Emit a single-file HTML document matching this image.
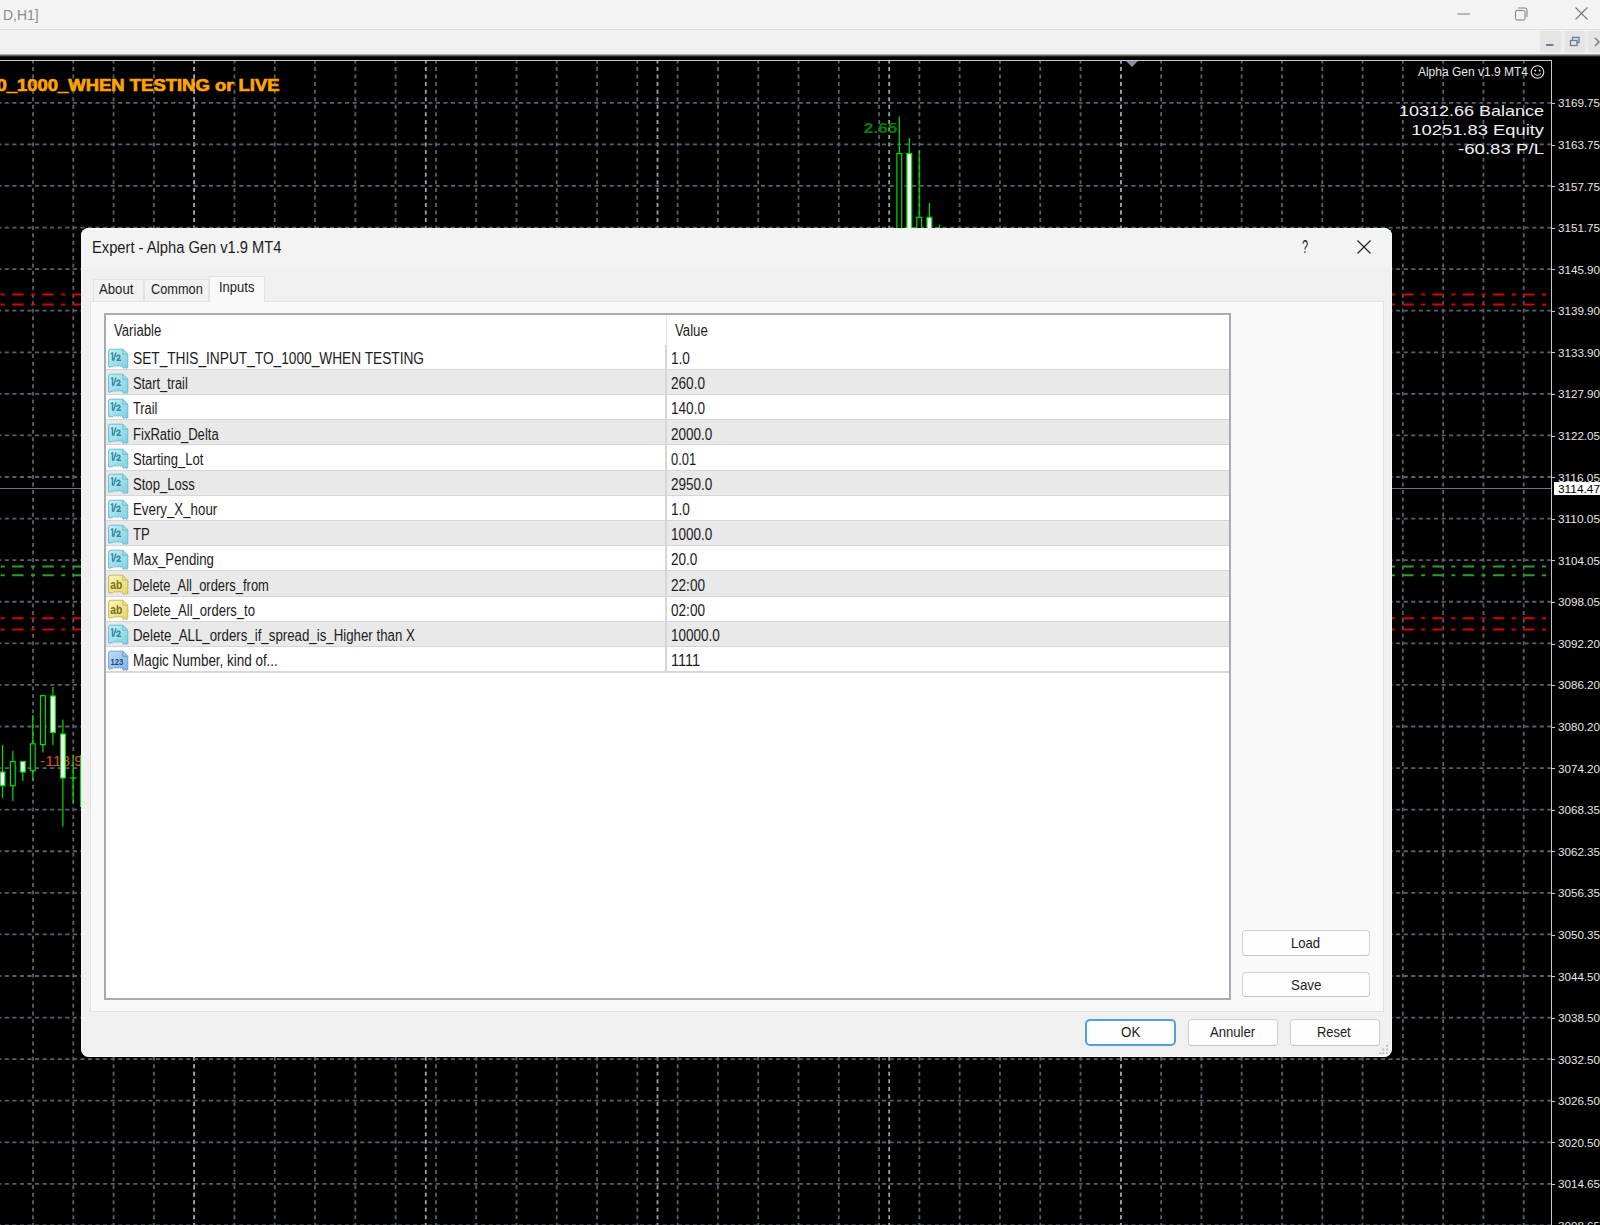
<!DOCTYPE html><html><head><meta charset="utf-8"><style>
*{box-sizing:border-box}
body{margin:0;width:1600px;height:1225px;overflow:hidden;position:relative;background:#000;font-family:"Liberation Sans",sans-serif}
.abs{position:absolute}
.t{position:absolute;white-space:pre;transform-origin:0 0;line-height:1}
#dlg{position:absolute;left:81px;top:228px;width:1311px;height:828.5px;background:#f0f0f0;border-radius:8px;overflow:hidden;box-shadow:inset 0 0 0 1px rgba(255,255,255,0.6)}
.btn{position:absolute;background:#fdfdfd;border:1px solid #d0d0d0;border-bottom-color:#c4c4c4;border-radius:4px}

</style></head><body>
<svg class="abs" style="left:0;top:0" width="1600" height="1225"><rect x="0" y="57" width="1600" height="1168" fill="#000"/><line x1="33.00" y1="61" x2="33.00" y2="1225" stroke="#56616d" stroke-width="1.8" stroke-dasharray="4 3.555" stroke-dashoffset="-6.00"/><line x1="73.29" y1="61" x2="73.29" y2="1225" stroke="#56616d" stroke-width="1.8" stroke-dasharray="4 3.555" stroke-dashoffset="-6.00"/><line x1="113.58" y1="61" x2="113.58" y2="1225" stroke="#56616d" stroke-width="1.8" stroke-dasharray="4 3.555" stroke-dashoffset="-6.00"/><line x1="153.87" y1="61" x2="153.87" y2="1225" stroke="#56616d" stroke-width="1.8" stroke-dasharray="4 3.555" stroke-dashoffset="-6.00"/><line x1="194.16" y1="61" x2="194.16" y2="1225" stroke="#56616d" stroke-width="1.8" stroke-dasharray="4 3.555" stroke-dashoffset="-6.00"/><line x1="234.45" y1="61" x2="234.45" y2="1225" stroke="#56616d" stroke-width="1.8" stroke-dasharray="4 3.555" stroke-dashoffset="-6.00"/><line x1="274.74" y1="61" x2="274.74" y2="1225" stroke="#56616d" stroke-width="1.8" stroke-dasharray="4 3.555" stroke-dashoffset="-6.00"/><line x1="315.03" y1="61" x2="315.03" y2="1225" stroke="#56616d" stroke-width="1.8" stroke-dasharray="4 3.555" stroke-dashoffset="-6.00"/><line x1="355.32" y1="61" x2="355.32" y2="1225" stroke="#56616d" stroke-width="1.8" stroke-dasharray="4 3.555" stroke-dashoffset="-6.00"/><line x1="395.61" y1="61" x2="395.61" y2="1225" stroke="#56616d" stroke-width="1.8" stroke-dasharray="4 3.555" stroke-dashoffset="-6.00"/><line x1="435.90" y1="61" x2="435.90" y2="1225" stroke="#56616d" stroke-width="1.8" stroke-dasharray="4 3.555" stroke-dashoffset="-6.00"/><line x1="476.19" y1="61" x2="476.19" y2="1225" stroke="#56616d" stroke-width="1.8" stroke-dasharray="4 3.555" stroke-dashoffset="-6.00"/><line x1="516.48" y1="61" x2="516.48" y2="1225" stroke="#56616d" stroke-width="1.8" stroke-dasharray="4 3.555" stroke-dashoffset="-6.00"/><line x1="556.77" y1="61" x2="556.77" y2="1225" stroke="#56616d" stroke-width="1.8" stroke-dasharray="4 3.555" stroke-dashoffset="-6.00"/><line x1="597.06" y1="61" x2="597.06" y2="1225" stroke="#56616d" stroke-width="1.8" stroke-dasharray="4 3.555" stroke-dashoffset="-6.00"/><line x1="637.35" y1="61" x2="637.35" y2="1225" stroke="#56616d" stroke-width="1.8" stroke-dasharray="4 3.555" stroke-dashoffset="-6.00"/><line x1="677.64" y1="61" x2="677.64" y2="1225" stroke="#56616d" stroke-width="1.8" stroke-dasharray="4 3.555" stroke-dashoffset="-6.00"/><line x1="717.93" y1="61" x2="717.93" y2="1225" stroke="#56616d" stroke-width="1.8" stroke-dasharray="4 3.555" stroke-dashoffset="-6.00"/><line x1="758.22" y1="61" x2="758.22" y2="1225" stroke="#56616d" stroke-width="1.8" stroke-dasharray="4 3.555" stroke-dashoffset="-6.00"/><line x1="798.51" y1="61" x2="798.51" y2="1225" stroke="#56616d" stroke-width="1.8" stroke-dasharray="4 3.555" stroke-dashoffset="-6.00"/><line x1="838.80" y1="61" x2="838.80" y2="1225" stroke="#56616d" stroke-width="1.8" stroke-dasharray="4 3.555" stroke-dashoffset="-6.00"/><line x1="879.09" y1="61" x2="879.09" y2="1225" stroke="#56616d" stroke-width="1.8" stroke-dasharray="4 3.555" stroke-dashoffset="-6.00"/><line x1="919.38" y1="61" x2="919.38" y2="1225" stroke="#56616d" stroke-width="1.8" stroke-dasharray="4 3.555" stroke-dashoffset="-6.00"/><line x1="959.67" y1="61" x2="959.67" y2="1225" stroke="#56616d" stroke-width="1.8" stroke-dasharray="4 3.555" stroke-dashoffset="-6.00"/><line x1="999.96" y1="61" x2="999.96" y2="1225" stroke="#56616d" stroke-width="1.8" stroke-dasharray="4 3.555" stroke-dashoffset="-6.00"/><line x1="1040.25" y1="61" x2="1040.25" y2="1225" stroke="#56616d" stroke-width="1.8" stroke-dasharray="4 3.555" stroke-dashoffset="-6.00"/><line x1="1080.54" y1="61" x2="1080.54" y2="1225" stroke="#56616d" stroke-width="1.8" stroke-dasharray="4 3.555" stroke-dashoffset="-6.00"/><line x1="1120.83" y1="61" x2="1120.83" y2="1225" stroke="#56616d" stroke-width="1.8" stroke-dasharray="4 3.555" stroke-dashoffset="-6.00"/><line x1="1161.12" y1="61" x2="1161.12" y2="1225" stroke="#56616d" stroke-width="1.8" stroke-dasharray="4 3.555" stroke-dashoffset="-6.00"/><line x1="1201.41" y1="61" x2="1201.41" y2="1225" stroke="#56616d" stroke-width="1.8" stroke-dasharray="4 3.555" stroke-dashoffset="-6.00"/><line x1="1241.70" y1="61" x2="1241.70" y2="1225" stroke="#56616d" stroke-width="1.8" stroke-dasharray="4 3.555" stroke-dashoffset="-6.00"/><line x1="1281.99" y1="61" x2="1281.99" y2="1225" stroke="#56616d" stroke-width="1.8" stroke-dasharray="4 3.555" stroke-dashoffset="-6.00"/><line x1="1322.28" y1="61" x2="1322.28" y2="1225" stroke="#56616d" stroke-width="1.8" stroke-dasharray="4 3.555" stroke-dashoffset="-6.00"/><line x1="1362.57" y1="61" x2="1362.57" y2="1225" stroke="#56616d" stroke-width="1.8" stroke-dasharray="4 3.555" stroke-dashoffset="-6.00"/><line x1="1402.86" y1="61" x2="1402.86" y2="1225" stroke="#56616d" stroke-width="1.8" stroke-dasharray="4 3.555" stroke-dashoffset="-6.00"/><line x1="1443.15" y1="61" x2="1443.15" y2="1225" stroke="#56616d" stroke-width="1.8" stroke-dasharray="4 3.555" stroke-dashoffset="-6.00"/><line x1="1483.44" y1="61" x2="1483.44" y2="1225" stroke="#56616d" stroke-width="1.8" stroke-dasharray="4 3.555" stroke-dashoffset="-6.00"/><line x1="1523.73" y1="61" x2="1523.73" y2="1225" stroke="#56616d" stroke-width="1.8" stroke-dasharray="4 3.555" stroke-dashoffset="-6.00"/><line x1="194.10" y1="61" x2="194.10" y2="1225" stroke="#a2a2a2" stroke-width="1.8" stroke-dasharray="4 3.555" stroke-dashoffset="-6.00"/><line x1="425.80" y1="61" x2="425.80" y2="1225" stroke="#a2a2a2" stroke-width="1.8" stroke-dasharray="4 3.555" stroke-dashoffset="-6.00"/><line x1="657.50" y1="61" x2="657.50" y2="1225" stroke="#a2a2a2" stroke-width="1.8" stroke-dasharray="4 3.555" stroke-dashoffset="-6.00"/><line x1="889.20" y1="61" x2="889.20" y2="1225" stroke="#a2a2a2" stroke-width="1.8" stroke-dasharray="4 3.555" stroke-dashoffset="-6.00"/><line x1="1120.90" y1="61" x2="1120.90" y2="1225" stroke="#a2a2a2" stroke-width="1.8" stroke-dasharray="4 3.555" stroke-dashoffset="-6.00"/><line x1="0" y1="102.80" x2="1551" y2="102.80" stroke="#56616d" stroke-width="1.8" stroke-dasharray="4.1 3.4615" stroke-dashoffset="-4.78"/><line x1="0" y1="144.38" x2="1551" y2="144.38" stroke="#56616d" stroke-width="1.8" stroke-dasharray="4.1 3.4615" stroke-dashoffset="-4.78"/><line x1="0" y1="185.96" x2="1551" y2="185.96" stroke="#56616d" stroke-width="1.8" stroke-dasharray="4.1 3.4615" stroke-dashoffset="-4.78"/><line x1="0" y1="227.54" x2="1551" y2="227.54" stroke="#56616d" stroke-width="1.8" stroke-dasharray="4.1 3.4615" stroke-dashoffset="-4.78"/><line x1="0" y1="269.12" x2="1551" y2="269.12" stroke="#56616d" stroke-width="1.8" stroke-dasharray="4.1 3.4615" stroke-dashoffset="-4.78"/><line x1="0" y1="310.70" x2="1551" y2="310.70" stroke="#56616d" stroke-width="1.8" stroke-dasharray="4.1 3.4615" stroke-dashoffset="-4.78"/><line x1="0" y1="352.28" x2="1551" y2="352.28" stroke="#56616d" stroke-width="1.8" stroke-dasharray="4.1 3.4615" stroke-dashoffset="-4.78"/><line x1="0" y1="393.86" x2="1551" y2="393.86" stroke="#56616d" stroke-width="1.8" stroke-dasharray="4.1 3.4615" stroke-dashoffset="-4.78"/><line x1="0" y1="435.44" x2="1551" y2="435.44" stroke="#56616d" stroke-width="1.8" stroke-dasharray="4.1 3.4615" stroke-dashoffset="-4.78"/><line x1="0" y1="477.02" x2="1551" y2="477.02" stroke="#56616d" stroke-width="1.8" stroke-dasharray="4.1 3.4615" stroke-dashoffset="-4.78"/><line x1="0" y1="518.60" x2="1551" y2="518.60" stroke="#56616d" stroke-width="1.8" stroke-dasharray="4.1 3.4615" stroke-dashoffset="-4.78"/><line x1="0" y1="560.18" x2="1551" y2="560.18" stroke="#56616d" stroke-width="1.8" stroke-dasharray="4.1 3.4615" stroke-dashoffset="-4.78"/><line x1="0" y1="601.76" x2="1551" y2="601.76" stroke="#56616d" stroke-width="1.8" stroke-dasharray="4.1 3.4615" stroke-dashoffset="-4.78"/><line x1="0" y1="643.34" x2="1551" y2="643.34" stroke="#56616d" stroke-width="1.8" stroke-dasharray="4.1 3.4615" stroke-dashoffset="-4.78"/><line x1="0" y1="684.92" x2="1551" y2="684.92" stroke="#56616d" stroke-width="1.8" stroke-dasharray="4.1 3.4615" stroke-dashoffset="-4.78"/><line x1="0" y1="726.50" x2="1551" y2="726.50" stroke="#56616d" stroke-width="1.8" stroke-dasharray="4.1 3.4615" stroke-dashoffset="-4.78"/><line x1="0" y1="768.08" x2="1551" y2="768.08" stroke="#56616d" stroke-width="1.8" stroke-dasharray="4.1 3.4615" stroke-dashoffset="-4.78"/><line x1="0" y1="809.66" x2="1551" y2="809.66" stroke="#56616d" stroke-width="1.8" stroke-dasharray="4.1 3.4615" stroke-dashoffset="-4.78"/><line x1="0" y1="851.24" x2="1551" y2="851.24" stroke="#56616d" stroke-width="1.8" stroke-dasharray="4.1 3.4615" stroke-dashoffset="-4.78"/><line x1="0" y1="892.82" x2="1551" y2="892.82" stroke="#56616d" stroke-width="1.8" stroke-dasharray="4.1 3.4615" stroke-dashoffset="-4.78"/><line x1="0" y1="934.40" x2="1551" y2="934.40" stroke="#56616d" stroke-width="1.8" stroke-dasharray="4.1 3.4615" stroke-dashoffset="-4.78"/><line x1="0" y1="975.98" x2="1551" y2="975.98" stroke="#56616d" stroke-width="1.8" stroke-dasharray="4.1 3.4615" stroke-dashoffset="-4.78"/><line x1="0" y1="1017.56" x2="1551" y2="1017.56" stroke="#56616d" stroke-width="1.8" stroke-dasharray="4.1 3.4615" stroke-dashoffset="-4.78"/><line x1="0" y1="1059.14" x2="1551" y2="1059.14" stroke="#56616d" stroke-width="1.8" stroke-dasharray="4.1 3.4615" stroke-dashoffset="-4.78"/><line x1="0" y1="1100.72" x2="1551" y2="1100.72" stroke="#56616d" stroke-width="1.8" stroke-dasharray="4.1 3.4615" stroke-dashoffset="-4.78"/><line x1="0" y1="1142.30" x2="1551" y2="1142.30" stroke="#56616d" stroke-width="1.8" stroke-dasharray="4.1 3.4615" stroke-dashoffset="-4.78"/><line x1="0" y1="1183.88" x2="1551" y2="1183.88" stroke="#56616d" stroke-width="1.8" stroke-dasharray="4.1 3.4615" stroke-dashoffset="-4.78"/><line x1="0" y1="1225.46" x2="1551" y2="1225.46" stroke="#56616d" stroke-width="1.8" stroke-dasharray="4.1 3.4615" stroke-dashoffset="-4.78"/><line x1="0" y1="488.5" x2="1551" y2="488.5" stroke="#6a7785" stroke-width="1.2"/><line x1="0" y1="294.5" x2="1547" y2="294.5" stroke="#d60000" stroke-width="2" stroke-dasharray="11.5 7.4 4 7.32" stroke-dashoffset="18.12"/><line x1="0" y1="304.5" x2="1547" y2="304.5" stroke="#d60000" stroke-width="2" stroke-dasharray="11.5 7.4 4 7.32" stroke-dashoffset="18.12"/><line x1="0" y1="618.3" x2="1547" y2="618.3" stroke="#d60000" stroke-width="2" stroke-dasharray="11.5 7.4 4 7.32" stroke-dashoffset="18.12"/><line x1="0" y1="629.5" x2="1547" y2="629.5" stroke="#d60000" stroke-width="2" stroke-dasharray="11.5 7.4 4 7.32" stroke-dashoffset="18.12"/><line x1="0" y1="566.6" x2="1547" y2="566.6" stroke="#26a026" stroke-width="2" stroke-dasharray="11.5 7.4 4 7.32" stroke-dashoffset="18.12"/><line x1="0" y1="575.3" x2="1547" y2="575.3" stroke="#26a026" stroke-width="2" stroke-dasharray="11.5 7.4 4 7.32" stroke-dashoffset="18.12"/><line x1="0" y1="60.5" x2="1551.5" y2="60.5" stroke="#c8c8c8" stroke-width="1"/><line x1="1551.5" y1="60" x2="1551.5" y2="1225" stroke="#c8c8c8" stroke-width="1"/><line x1="1551" y1="103.5" x2="1555" y2="103.5" stroke="#c8c8c8" stroke-width="1"/><text x="1558" y="107.3" fill="#e6e6e6" font-family="Liberation Sans" font-size="11.5" textLength="42" lengthAdjust="spacingAndGlyphs">3169.75</text><line x1="1551" y1="145.5" x2="1555" y2="145.5" stroke="#c8c8c8" stroke-width="1"/><text x="1558" y="148.9" fill="#e6e6e6" font-family="Liberation Sans" font-size="11.5" textLength="42" lengthAdjust="spacingAndGlyphs">3163.75</text><line x1="1551" y1="186.5" x2="1555" y2="186.5" stroke="#c8c8c8" stroke-width="1"/><text x="1558" y="190.5" fill="#e6e6e6" font-family="Liberation Sans" font-size="11.5" textLength="42" lengthAdjust="spacingAndGlyphs">3157.75</text><line x1="1551" y1="228.5" x2="1555" y2="228.5" stroke="#c8c8c8" stroke-width="1"/><text x="1558" y="232.0" fill="#e6e6e6" font-family="Liberation Sans" font-size="11.5" textLength="42" lengthAdjust="spacingAndGlyphs">3151.75</text><line x1="1551" y1="269.5" x2="1555" y2="269.5" stroke="#c8c8c8" stroke-width="1"/><text x="1558" y="273.6" fill="#e6e6e6" font-family="Liberation Sans" font-size="11.5" textLength="42" lengthAdjust="spacingAndGlyphs">3145.90</text><line x1="1551" y1="311.5" x2="1555" y2="311.5" stroke="#c8c8c8" stroke-width="1"/><text x="1558" y="315.2" fill="#e6e6e6" font-family="Liberation Sans" font-size="11.5" textLength="42" lengthAdjust="spacingAndGlyphs">3139.90</text><line x1="1551" y1="352.5" x2="1555" y2="352.5" stroke="#c8c8c8" stroke-width="1"/><text x="1558" y="356.8" fill="#e6e6e6" font-family="Liberation Sans" font-size="11.5" textLength="42" lengthAdjust="spacingAndGlyphs">3133.90</text><line x1="1551" y1="394.5" x2="1555" y2="394.5" stroke="#c8c8c8" stroke-width="1"/><text x="1558" y="398.4" fill="#e6e6e6" font-family="Liberation Sans" font-size="11.5" textLength="42" lengthAdjust="spacingAndGlyphs">3127.90</text><line x1="1551" y1="436.5" x2="1555" y2="436.5" stroke="#c8c8c8" stroke-width="1"/><text x="1558" y="439.9" fill="#e6e6e6" font-family="Liberation Sans" font-size="11.5" textLength="42" lengthAdjust="spacingAndGlyphs">3122.05</text><line x1="1551" y1="477.5" x2="1555" y2="477.5" stroke="#c8c8c8" stroke-width="1"/><text x="1558" y="481.5" fill="#e6e6e6" font-family="Liberation Sans" font-size="11.5" textLength="42" lengthAdjust="spacingAndGlyphs">3116.05</text><line x1="1551" y1="519.5" x2="1555" y2="519.5" stroke="#c8c8c8" stroke-width="1"/><text x="1558" y="523.1" fill="#e6e6e6" font-family="Liberation Sans" font-size="11.5" textLength="42" lengthAdjust="spacingAndGlyphs">3110.05</text><line x1="1551" y1="560.5" x2="1555" y2="560.5" stroke="#c8c8c8" stroke-width="1"/><text x="1558" y="564.7" fill="#e6e6e6" font-family="Liberation Sans" font-size="11.5" textLength="42" lengthAdjust="spacingAndGlyphs">3104.05</text><line x1="1551" y1="602.5" x2="1555" y2="602.5" stroke="#c8c8c8" stroke-width="1"/><text x="1558" y="606.3" fill="#e6e6e6" font-family="Liberation Sans" font-size="11.5" textLength="42" lengthAdjust="spacingAndGlyphs">3098.05</text><line x1="1551" y1="644.5" x2="1555" y2="644.5" stroke="#c8c8c8" stroke-width="1"/><text x="1558" y="647.8" fill="#e6e6e6" font-family="Liberation Sans" font-size="11.5" textLength="42" lengthAdjust="spacingAndGlyphs">3092.20</text><line x1="1551" y1="685.5" x2="1555" y2="685.5" stroke="#c8c8c8" stroke-width="1"/><text x="1558" y="689.4" fill="#e6e6e6" font-family="Liberation Sans" font-size="11.5" textLength="42" lengthAdjust="spacingAndGlyphs">3086.20</text><line x1="1551" y1="727.5" x2="1555" y2="727.5" stroke="#c8c8c8" stroke-width="1"/><text x="1558" y="731.0" fill="#e6e6e6" font-family="Liberation Sans" font-size="11.5" textLength="42" lengthAdjust="spacingAndGlyphs">3080.20</text><line x1="1551" y1="768.5" x2="1555" y2="768.5" stroke="#c8c8c8" stroke-width="1"/><text x="1558" y="772.6" fill="#e6e6e6" font-family="Liberation Sans" font-size="11.5" textLength="42" lengthAdjust="spacingAndGlyphs">3074.20</text><line x1="1551" y1="810.5" x2="1555" y2="810.5" stroke="#c8c8c8" stroke-width="1"/><text x="1558" y="814.2" fill="#e6e6e6" font-family="Liberation Sans" font-size="11.5" textLength="42" lengthAdjust="spacingAndGlyphs">3068.35</text><line x1="1551" y1="851.5" x2="1555" y2="851.5" stroke="#c8c8c8" stroke-width="1"/><text x="1558" y="855.7" fill="#e6e6e6" font-family="Liberation Sans" font-size="11.5" textLength="42" lengthAdjust="spacingAndGlyphs">3062.35</text><line x1="1551" y1="893.5" x2="1555" y2="893.5" stroke="#c8c8c8" stroke-width="1"/><text x="1558" y="897.3" fill="#e6e6e6" font-family="Liberation Sans" font-size="11.5" textLength="42" lengthAdjust="spacingAndGlyphs">3056.35</text><line x1="1551" y1="935.5" x2="1555" y2="935.5" stroke="#c8c8c8" stroke-width="1"/><text x="1558" y="938.9" fill="#e6e6e6" font-family="Liberation Sans" font-size="11.5" textLength="42" lengthAdjust="spacingAndGlyphs">3050.35</text><line x1="1551" y1="976.5" x2="1555" y2="976.5" stroke="#c8c8c8" stroke-width="1"/><text x="1558" y="980.5" fill="#e6e6e6" font-family="Liberation Sans" font-size="11.5" textLength="42" lengthAdjust="spacingAndGlyphs">3044.50</text><line x1="1551" y1="1018.5" x2="1555" y2="1018.5" stroke="#c8c8c8" stroke-width="1"/><text x="1558" y="1022.1" fill="#e6e6e6" font-family="Liberation Sans" font-size="11.5" textLength="42" lengthAdjust="spacingAndGlyphs">3038.50</text><line x1="1551" y1="1059.5" x2="1555" y2="1059.5" stroke="#c8c8c8" stroke-width="1"/><text x="1558" y="1063.6" fill="#e6e6e6" font-family="Liberation Sans" font-size="11.5" textLength="42" lengthAdjust="spacingAndGlyphs">3032.50</text><line x1="1551" y1="1101.5" x2="1555" y2="1101.5" stroke="#c8c8c8" stroke-width="1"/><text x="1558" y="1105.2" fill="#e6e6e6" font-family="Liberation Sans" font-size="11.5" textLength="42" lengthAdjust="spacingAndGlyphs">3026.50</text><line x1="1551" y1="1142.5" x2="1555" y2="1142.5" stroke="#c8c8c8" stroke-width="1"/><text x="1558" y="1146.8" fill="#e6e6e6" font-family="Liberation Sans" font-size="11.5" textLength="42" lengthAdjust="spacingAndGlyphs">3020.50</text><line x1="1551" y1="1184.5" x2="1555" y2="1184.5" stroke="#c8c8c8" stroke-width="1"/><text x="1558" y="1188.4" fill="#e6e6e6" font-family="Liberation Sans" font-size="11.5" textLength="42" lengthAdjust="spacingAndGlyphs">3014.65</text><line x1="1551" y1="1226.5" x2="1555" y2="1226.5" stroke="#c8c8c8" stroke-width="1"/><text x="1558" y="1230.0" fill="#e6e6e6" font-family="Liberation Sans" font-size="11.5" textLength="42" lengthAdjust="spacingAndGlyphs">3008.65</text><rect x="1554" y="482" width="46" height="13" fill="#fff"/><text x="1558" y="492.6" fill="#000" font-family="Liberation Sans" font-size="11.5" textLength="42" lengthAdjust="spacingAndGlyphs">3114.47</text><path d="M1126 61 L1138 61 L1132 67 Z" fill="#8090a0"/><text x="40" y="766" fill="#e0501a" font-family="Liberation Sans" font-size="15.5">-118.9</text><line x1="2.5" y1="745" x2="2.5" y2="798" stroke="#00e000" stroke-width="1.2"/><rect x="0.1" y="772" width="4.8" height="13.7" fill="#fff" stroke="#00e000" stroke-width="1.2"/><line x1="12.8" y1="751" x2="12.8" y2="801" stroke="#00e000" stroke-width="1.2"/><rect x="10.4" y="761.5" width="4.8" height="24.2" fill="#000" stroke="#00e000" stroke-width="1.2"/><line x1="22.8" y1="761.5" x2="22.8" y2="781" stroke="#00e000" stroke-width="1.2"/><rect x="20.4" y="761.5" width="4.8" height="10.5" fill="#fff" stroke="#00e000" stroke-width="1.2"/><line x1="32.8" y1="715" x2="32.8" y2="781" stroke="#00e000" stroke-width="1.2"/><rect x="30.4" y="743.8" width="4.8" height="26.8" fill="#000" stroke="#00e000" stroke-width="1.2"/><line x1="42.9" y1="695" x2="42.9" y2="752.4" stroke="#00e000" stroke-width="1.2"/><rect x="40.5" y="695.7" width="4.8" height="48.9" fill="#000" stroke="#00e000" stroke-width="1.2"/><line x1="52.9" y1="687" x2="52.9" y2="745" stroke="#00e000" stroke-width="1.2"/><rect x="50.5" y="696" width="4.8" height="36.5" fill="#fff" stroke="#00e000" stroke-width="1.2"/><line x1="62.9" y1="719.6" x2="62.9" y2="826.6" stroke="#00e000" stroke-width="1.2"/><rect x="60.5" y="734" width="4.8" height="44.0" fill="#fff" stroke="#00e000" stroke-width="1.2"/><line x1="73.1" y1="755.3" x2="73.1" y2="803.4" stroke="#00e000" stroke-width="1.2"/><line x1="70" y1="778" x2="76.5" y2="778" stroke="#00e000" stroke-width="1.2"/><line x1="80.5" y1="755" x2="80.5" y2="807" stroke="#00e000" stroke-width="1.2"/><line x1="899.3" y1="116.5" x2="899.3" y2="330" stroke="#00e000" stroke-width="1.2"/><rect x="896.9" y="153.5" width="4.8" height="146.5" fill="#000" stroke="#00e000" stroke-width="1.2"/><line x1="909.3" y1="138" x2="909.3" y2="330" stroke="#00e000" stroke-width="1.2"/><rect x="906.9" y="153.5" width="4.8" height="146.5" fill="#fff" stroke="#00e000" stroke-width="1.2"/><line x1="919.2" y1="150.5" x2="919.2" y2="330" stroke="#00e000" stroke-width="1.2"/><rect x="916.8" y="217.4" width="4.8" height="82.6" fill="#000" stroke="#00e000" stroke-width="1.2"/><line x1="929.4" y1="203" x2="929.4" y2="330" stroke="#00e000" stroke-width="1.2"/><rect x="927.0" y="217.4" width="4.8" height="82.6" fill="#fff" stroke="#00e000" stroke-width="1.2"/><line x1="939.5" y1="224.6" x2="939.5" y2="300" stroke="#00e000" stroke-width="1.2"/><text x="897.4" y="132.5" fill="#0a7a0a" font-family="Liberation Sans" font-weight="bold" font-size="15" text-anchor="end" textLength="33.6" lengthAdjust="spacingAndGlyphs">2.65</text><text x="279.5" y="91.3" fill="#ffa500" stroke="#ffa500" stroke-width="0.7" font-family="Liberation Sans" font-weight="bold" font-size="17" text-anchor="end" textLength="283" lengthAdjust="spacingAndGlyphs">0_1000_WHEN TESTING or LIVE</text><text x="1528" y="76" fill="#e8e8e8" font-family="Liberation Sans" font-size="12" text-anchor="end">Alpha Gen v1.9 MT4</text><circle cx="1537.5" cy="72" r="6.3" fill="none" stroke="#e8e8e8" stroke-width="1.1"/><circle cx="1535.3" cy="70.5" r="0.9" fill="#e8e8e8"/><circle cx="1539.7" cy="70.5" r="0.9" fill="#e8e8e8"/><path d="M1534 73.5 Q1537.5 77 1541 73.5" fill="none" stroke="#e8e8e8" stroke-width="1"/><text x="1544" y="115.8" fill="#f0f0f0" font-family="Liberation Sans" font-size="15" text-anchor="end" textLength="145.0" lengthAdjust="spacingAndGlyphs">10312.66 Balance</text><text x="1544" y="135" fill="#f0f0f0" font-family="Liberation Sans" font-size="15" text-anchor="end" textLength="132.7" lengthAdjust="spacingAndGlyphs">10251.83 Equity</text><text x="1544" y="154" fill="#f0f0f0" font-family="Liberation Sans" font-size="15" text-anchor="end" textLength="86.0" lengthAdjust="spacingAndGlyphs">-60.83 P/L</text></svg>
<div class="abs" style="left:0;top:0;width:1600px;height:29px;background:#f3f3f3"></div>
<div class="abs" style="left:0;top:29px;width:1600px;height:1px;background:#dedede"></div>
<div class="abs" style="left:0;top:30px;width:1600px;height:24px;background:#f0f0f0"></div>
<div class="abs" style="left:0;top:54px;width:1600px;height:3px;background:linear-gradient(#c8c8c8,#505050 60%,#000)"></div>
<div class="t" style="left:2.6px;top:6.5px;font-size:15px;color:#8a8a8a;transform:scaleX(0.93)">D,H1]</div>
<svg class="abs" style="left:0;top:0" width="1600" height="57"><line x1="1457.5" y1="14" x2="1470" y2="14" stroke="#7a7a7a" stroke-width="1"/><rect x="1515.5" y="10.5" width="9.5" height="9.5" rx="1.5" fill="none" stroke="#7a7a7a" stroke-width="1"/><path d="M1518 8 h7 a2 2 0 0 1 2 2 v7" fill="none" stroke="#7a7a7a" stroke-width="1"/><line x1="1575.5" y1="7.5" x2="1587.5" y2="19.5" stroke="#7a7a7a" stroke-width="1.1"/><line x1="1587.5" y1="7.5" x2="1575.5" y2="19.5" stroke="#7a7a7a" stroke-width="1.1"/><rect x="1540" y="31" width="21.5" height="21.5" rx="2" fill="#e5e5e5"/><rect x="1564.3" y="31" width="21.5" height="21.5" rx="2" fill="#e5e5e5"/><rect x="1587.7" y="31" width="21.5" height="21.5" rx="2" fill="#e5e5e5"/><rect x="1546" y="44" width="7.5" height="2" fill="#6b7f99"/><rect x="1570.5" y="40.5" width="6.5" height="5" fill="none" stroke="#6b7f99" stroke-width="1.3"/><path d="M1572.5 40 v-2.5 h6.5 v5 h-2" fill="none" stroke="#6b7f99" stroke-width="1.3"/><path d="M1595 38 l4 4 l-4 4" fill="none" stroke="#6b7f99" stroke-width="1.5"/></svg>
<div id="dlg"><div class="abs" style="left:0;top:0;width:100%;height:39px;background:#f3f3f3"></div><div class="t" style="left:11.10px;top:12.00px;font-size:16px;color:#1b1b1b;transform:scaleX(0.9185)">Expert - Alpha Gen v1.9 MT4</div><div class="t" style="left:1220.90px;top:11.00px;font-size:17.5px;color:#1b1b1b;transform:scaleX(0.6269)">?</div><svg class="abs" style="left:0;top:0" width="1311" height="40"><line x1="1276.5" y1="12.5" x2="1289.5" y2="25.5" stroke="#1b1b1b" stroke-width="1.1"/><line x1="1289.5" y1="12.5" x2="1276.5" y2="25.5" stroke="#1b1b1b" stroke-width="1.1"/></svg><div class="abs" style="left:11.5px;top:50.5px;width:51px;height:23px;background:#f2f2f2;border:1px solid #e2e2e2;border-bottom:none"></div><div class="abs" style="left:63px;top:50.5px;width:65px;height:23px;background:#f2f2f2;border:1px solid #e2e2e2;border-bottom:none"></div><div class="abs" style="left:8.599999999999994px;top:72.60000000000002px;width:1294.4px;height:711.6px;background:#f9f9f9;border:1px solid #e2e2e2"></div><div class="abs" style="left:128px;top:48px;width:56px;height:26px;background:#f9f9f9;border:1px solid #e2e2e2;border-bottom:none"></div><div class="t" style="left:18.00px;top:53.00px;font-size:15px;color:#1b1b1b;transform:scaleX(0.8777)">About</div><div class="t" style="left:70.00px;top:53.00px;font-size:15px;color:#1b1b1b;transform:scaleX(0.8512)">Common</div><div class="t" style="left:138.00px;top:51.00px;font-size:15px;color:#1b1b1b;transform:scaleX(0.8664)">Inputs</div><div class="abs" style="left:23.299999999999997px;top:85px;width:1126.7px;height:687px;background:#fff;border:2px solid #a6acb4"></div><div class="abs" style="left:584.5px;top:87px;width:1.5px;height:30px;background:#e8e8e8"></div><div class="t" style="left:33.00px;top:95.00px;font-size:16px;color:#1b1b1b;transform:scaleX(0.8215)">Variable</div><div class="t" style="left:593.75px;top:95.00px;font-size:16px;color:#1b1b1b;transform:scaleX(0.8244)">Value</div><div class="abs" style="left:25px;top:116.80px;width:1123px;height:25.17px;background:#fff"></div><div class="abs" style="left:25px;top:140.97px;width:1123px;height:2px;background:#d6d6d6"></div><div class="abs" style="left:584.2px;top:116.80px;width:1.8px;height:25.17px;background:#d6d6d6"></div><div class="t" style="left:52.20px;top:123.00px;font-size:16px;color:#1b1b1b;transform:scaleX(0.8560)">SET_THIS_INPUT_TO_1000_WHEN TESTING</div><div class="t" style="left:589.90px;top:123.00px;font-size:16px;color:#1b1b1b;transform:scaleX(0.8498)">1.0</div><svg class="abs" style="left:26.75px;top:119.50px" width="21" height="22" viewBox="0 0 21 22"><defs><linearGradient id="g0" x1="0" y1="0" x2="1" y2="1"><stop offset="0" stop-color="#c2f2fb"/><stop offset="1" stop-color="#7ccfe3"/></linearGradient></defs><path d="M0.6 3 Q0.6 1.2 2.4 1.2 H14.8 L19.8 6 V19.6 L18.6 20.4 L17 19.5 L15.3 20.4 L14 17.3 L12.6 18.3 L11.3 17.3 L10 18.3 L8.7 17.3 L7.4 18.3 L6 17.4 L4.6 18.8 L3 18.4 L1.8 19.4 L0.6 18.8 Z" fill="url(#g0)" stroke="#6ab4c6" stroke-width="0.9" stroke-linejoin="round"/><path d="M14.8 1.4 V6.2 H19.6" fill="none" stroke="#6ab4c6" stroke-width="0.9"/><g fill="none" stroke="#3a8797" stroke-width="1.4" stroke-linecap="round" stroke-linejoin="round"><path d="M3.4 5.6 L4.5 4.8 V12"/><path d="M5.6 12.2 L7.8 5"/><path d="M8.8 8.4 Q9.6 7.1 10.9 7.3 Q12.4 7.7 11.8 9.2 L9 12.3 H12.6"/></g></svg><div class="abs" style="left:25px;top:141.97px;width:1123px;height:25.17px;background:#e9e9e9"></div><div class="abs" style="left:25px;top:166.14px;width:1123px;height:2px;background:#d6d6d6"></div><div class="abs" style="left:584.2px;top:141.97px;width:1.8px;height:25.17px;background:#d6d6d6"></div><div class="t" style="left:52.20px;top:148.00px;font-size:16px;color:#1b1b1b;transform:scaleX(0.8004)">Start_trail</div><div class="t" style="left:589.90px;top:148.00px;font-size:16px;color:#1b1b1b;transform:scaleX(0.8493)">260.0</div><svg class="abs" style="left:26.75px;top:144.67px" width="21" height="22" viewBox="0 0 21 22"><defs><linearGradient id="g1" x1="0" y1="0" x2="1" y2="1"><stop offset="0" stop-color="#c2f2fb"/><stop offset="1" stop-color="#7ccfe3"/></linearGradient></defs><path d="M0.6 3 Q0.6 1.2 2.4 1.2 H14.8 L19.8 6 V19.6 L18.6 20.4 L17 19.5 L15.3 20.4 L14 17.3 L12.6 18.3 L11.3 17.3 L10 18.3 L8.7 17.3 L7.4 18.3 L6 17.4 L4.6 18.8 L3 18.4 L1.8 19.4 L0.6 18.8 Z" fill="url(#g1)" stroke="#6ab4c6" stroke-width="0.9" stroke-linejoin="round"/><path d="M14.8 1.4 V6.2 H19.6" fill="none" stroke="#6ab4c6" stroke-width="0.9"/><g fill="none" stroke="#3a8797" stroke-width="1.4" stroke-linecap="round" stroke-linejoin="round"><path d="M3.4 5.6 L4.5 4.8 V12"/><path d="M5.6 12.2 L7.8 5"/><path d="M8.8 8.4 Q9.6 7.1 10.9 7.3 Q12.4 7.7 11.8 9.2 L9 12.3 H12.6"/></g></svg><div class="abs" style="left:25px;top:167.14px;width:1123px;height:25.17px;background:#fff"></div><div class="abs" style="left:25px;top:191.31px;width:1123px;height:2px;background:#d6d6d6"></div><div class="abs" style="left:584.2px;top:167.14px;width:1.8px;height:25.17px;background:#d6d6d6"></div><div class="t" style="left:52.20px;top:173.00px;font-size:16px;color:#1b1b1b;transform:scaleX(0.7964)">Trail</div><div class="t" style="left:589.90px;top:173.00px;font-size:16px;color:#1b1b1b;transform:scaleX(0.8493)">140.0</div><svg class="abs" style="left:26.75px;top:169.84px" width="21" height="22" viewBox="0 0 21 22"><defs><linearGradient id="g2" x1="0" y1="0" x2="1" y2="1"><stop offset="0" stop-color="#c2f2fb"/><stop offset="1" stop-color="#7ccfe3"/></linearGradient></defs><path d="M0.6 3 Q0.6 1.2 2.4 1.2 H14.8 L19.8 6 V19.6 L18.6 20.4 L17 19.5 L15.3 20.4 L14 17.3 L12.6 18.3 L11.3 17.3 L10 18.3 L8.7 17.3 L7.4 18.3 L6 17.4 L4.6 18.8 L3 18.4 L1.8 19.4 L0.6 18.8 Z" fill="url(#g2)" stroke="#6ab4c6" stroke-width="0.9" stroke-linejoin="round"/><path d="M14.8 1.4 V6.2 H19.6" fill="none" stroke="#6ab4c6" stroke-width="0.9"/><g fill="none" stroke="#3a8797" stroke-width="1.4" stroke-linecap="round" stroke-linejoin="round"><path d="M3.4 5.6 L4.5 4.8 V12"/><path d="M5.6 12.2 L7.8 5"/><path d="M8.8 8.4 Q9.6 7.1 10.9 7.3 Q12.4 7.7 11.8 9.2 L9 12.3 H12.6"/></g></svg><div class="abs" style="left:25px;top:192.31px;width:1123px;height:25.17px;background:#e9e9e9"></div><div class="abs" style="left:25px;top:216.48px;width:1123px;height:2px;background:#d6d6d6"></div><div class="abs" style="left:584.2px;top:192.31px;width:1.8px;height:25.17px;background:#d6d6d6"></div><div class="t" style="left:52.20px;top:199.00px;font-size:16px;color:#1b1b1b;transform:scaleX(0.8166)">FixRatio_Delta</div><div class="t" style="left:589.90px;top:199.00px;font-size:16px;color:#1b1b1b;transform:scaleX(0.8418)">2000.0</div><svg class="abs" style="left:26.75px;top:195.01px" width="21" height="22" viewBox="0 0 21 22"><defs><linearGradient id="g3" x1="0" y1="0" x2="1" y2="1"><stop offset="0" stop-color="#c2f2fb"/><stop offset="1" stop-color="#7ccfe3"/></linearGradient></defs><path d="M0.6 3 Q0.6 1.2 2.4 1.2 H14.8 L19.8 6 V19.6 L18.6 20.4 L17 19.5 L15.3 20.4 L14 17.3 L12.6 18.3 L11.3 17.3 L10 18.3 L8.7 17.3 L7.4 18.3 L6 17.4 L4.6 18.8 L3 18.4 L1.8 19.4 L0.6 18.8 Z" fill="url(#g3)" stroke="#6ab4c6" stroke-width="0.9" stroke-linejoin="round"/><path d="M14.8 1.4 V6.2 H19.6" fill="none" stroke="#6ab4c6" stroke-width="0.9"/><g fill="none" stroke="#3a8797" stroke-width="1.4" stroke-linecap="round" stroke-linejoin="round"><path d="M3.4 5.6 L4.5 4.8 V12"/><path d="M5.6 12.2 L7.8 5"/><path d="M8.8 8.4 Q9.6 7.1 10.9 7.3 Q12.4 7.7 11.8 9.2 L9 12.3 H12.6"/></g></svg><div class="abs" style="left:25px;top:217.48px;width:1123px;height:25.17px;background:#fff"></div><div class="abs" style="left:25px;top:241.65px;width:1123px;height:2px;background:#d6d6d6"></div><div class="abs" style="left:584.2px;top:217.48px;width:1.8px;height:25.17px;background:#d6d6d6"></div><div class="t" style="left:52.20px;top:224.00px;font-size:16px;color:#1b1b1b;transform:scaleX(0.8147)">Starting_Lot</div><div class="t" style="left:589.90px;top:224.00px;font-size:16px;color:#1b1b1b;transform:scaleX(0.8061)">0.01</div><svg class="abs" style="left:26.75px;top:220.18px" width="21" height="22" viewBox="0 0 21 22"><defs><linearGradient id="g4" x1="0" y1="0" x2="1" y2="1"><stop offset="0" stop-color="#c2f2fb"/><stop offset="1" stop-color="#7ccfe3"/></linearGradient></defs><path d="M0.6 3 Q0.6 1.2 2.4 1.2 H14.8 L19.8 6 V19.6 L18.6 20.4 L17 19.5 L15.3 20.4 L14 17.3 L12.6 18.3 L11.3 17.3 L10 18.3 L8.7 17.3 L7.4 18.3 L6 17.4 L4.6 18.8 L3 18.4 L1.8 19.4 L0.6 18.8 Z" fill="url(#g4)" stroke="#6ab4c6" stroke-width="0.9" stroke-linejoin="round"/><path d="M14.8 1.4 V6.2 H19.6" fill="none" stroke="#6ab4c6" stroke-width="0.9"/><g fill="none" stroke="#3a8797" stroke-width="1.4" stroke-linecap="round" stroke-linejoin="round"><path d="M3.4 5.6 L4.5 4.8 V12"/><path d="M5.6 12.2 L7.8 5"/><path d="M8.8 8.4 Q9.6 7.1 10.9 7.3 Q12.4 7.7 11.8 9.2 L9 12.3 H12.6"/></g></svg><div class="abs" style="left:25px;top:242.65px;width:1123px;height:25.17px;background:#e9e9e9"></div><div class="abs" style="left:25px;top:266.82px;width:1123px;height:2px;background:#d6d6d6"></div><div class="abs" style="left:584.2px;top:242.65px;width:1.8px;height:25.17px;background:#d6d6d6"></div><div class="t" style="left:52.20px;top:249.00px;font-size:16px;color:#1b1b1b;transform:scaleX(0.8173)">Stop_Loss</div><div class="t" style="left:589.90px;top:249.00px;font-size:16px;color:#1b1b1b;transform:scaleX(0.8418)">2950.0</div><svg class="abs" style="left:26.75px;top:245.35px" width="21" height="22" viewBox="0 0 21 22"><defs><linearGradient id="g5" x1="0" y1="0" x2="1" y2="1"><stop offset="0" stop-color="#c2f2fb"/><stop offset="1" stop-color="#7ccfe3"/></linearGradient></defs><path d="M0.6 3 Q0.6 1.2 2.4 1.2 H14.8 L19.8 6 V19.6 L18.6 20.4 L17 19.5 L15.3 20.4 L14 17.3 L12.6 18.3 L11.3 17.3 L10 18.3 L8.7 17.3 L7.4 18.3 L6 17.4 L4.6 18.8 L3 18.4 L1.8 19.4 L0.6 18.8 Z" fill="url(#g5)" stroke="#6ab4c6" stroke-width="0.9" stroke-linejoin="round"/><path d="M14.8 1.4 V6.2 H19.6" fill="none" stroke="#6ab4c6" stroke-width="0.9"/><g fill="none" stroke="#3a8797" stroke-width="1.4" stroke-linecap="round" stroke-linejoin="round"><path d="M3.4 5.6 L4.5 4.8 V12"/><path d="M5.6 12.2 L7.8 5"/><path d="M8.8 8.4 Q9.6 7.1 10.9 7.3 Q12.4 7.7 11.8 9.2 L9 12.3 H12.6"/></g></svg><div class="abs" style="left:25px;top:267.82px;width:1123px;height:25.17px;background:#fff"></div><div class="abs" style="left:25px;top:291.99px;width:1123px;height:2px;background:#d6d6d6"></div><div class="abs" style="left:584.2px;top:267.82px;width:1.8px;height:25.17px;background:#d6d6d6"></div><div class="t" style="left:52.20px;top:274.00px;font-size:16px;color:#1b1b1b;transform:scaleX(0.8304)">Every_X_hour</div><div class="t" style="left:589.90px;top:274.00px;font-size:16px;color:#1b1b1b;transform:scaleX(0.8498)">1.0</div><svg class="abs" style="left:26.75px;top:270.52px" width="21" height="22" viewBox="0 0 21 22"><defs><linearGradient id="g6" x1="0" y1="0" x2="1" y2="1"><stop offset="0" stop-color="#c2f2fb"/><stop offset="1" stop-color="#7ccfe3"/></linearGradient></defs><path d="M0.6 3 Q0.6 1.2 2.4 1.2 H14.8 L19.8 6 V19.6 L18.6 20.4 L17 19.5 L15.3 20.4 L14 17.3 L12.6 18.3 L11.3 17.3 L10 18.3 L8.7 17.3 L7.4 18.3 L6 17.4 L4.6 18.8 L3 18.4 L1.8 19.4 L0.6 18.8 Z" fill="url(#g6)" stroke="#6ab4c6" stroke-width="0.9" stroke-linejoin="round"/><path d="M14.8 1.4 V6.2 H19.6" fill="none" stroke="#6ab4c6" stroke-width="0.9"/><g fill="none" stroke="#3a8797" stroke-width="1.4" stroke-linecap="round" stroke-linejoin="round"><path d="M3.4 5.6 L4.5 4.8 V12"/><path d="M5.6 12.2 L7.8 5"/><path d="M8.8 8.4 Q9.6 7.1 10.9 7.3 Q12.4 7.7 11.8 9.2 L9 12.3 H12.6"/></g></svg><div class="abs" style="left:25px;top:292.99px;width:1123px;height:25.17px;background:#e9e9e9"></div><div class="abs" style="left:25px;top:317.16px;width:1123px;height:2px;background:#d6d6d6"></div><div class="abs" style="left:584.2px;top:292.99px;width:1.8px;height:25.17px;background:#d6d6d6"></div><div class="t" style="left:52.20px;top:299.00px;font-size:16px;color:#1b1b1b;transform:scaleX(0.8216)">TP</div><div class="t" style="left:589.90px;top:299.00px;font-size:16px;color:#1b1b1b;transform:scaleX(0.8418)">1000.0</div><svg class="abs" style="left:26.75px;top:295.69px" width="21" height="22" viewBox="0 0 21 22"><defs><linearGradient id="g7" x1="0" y1="0" x2="1" y2="1"><stop offset="0" stop-color="#c2f2fb"/><stop offset="1" stop-color="#7ccfe3"/></linearGradient></defs><path d="M0.6 3 Q0.6 1.2 2.4 1.2 H14.8 L19.8 6 V19.6 L18.6 20.4 L17 19.5 L15.3 20.4 L14 17.3 L12.6 18.3 L11.3 17.3 L10 18.3 L8.7 17.3 L7.4 18.3 L6 17.4 L4.6 18.8 L3 18.4 L1.8 19.4 L0.6 18.8 Z" fill="url(#g7)" stroke="#6ab4c6" stroke-width="0.9" stroke-linejoin="round"/><path d="M14.8 1.4 V6.2 H19.6" fill="none" stroke="#6ab4c6" stroke-width="0.9"/><g fill="none" stroke="#3a8797" stroke-width="1.4" stroke-linecap="round" stroke-linejoin="round"><path d="M3.4 5.6 L4.5 4.8 V12"/><path d="M5.6 12.2 L7.8 5"/><path d="M8.8 8.4 Q9.6 7.1 10.9 7.3 Q12.4 7.7 11.8 9.2 L9 12.3 H12.6"/></g></svg><div class="abs" style="left:25px;top:318.16px;width:1123px;height:25.17px;background:#fff"></div><div class="abs" style="left:25px;top:342.33px;width:1123px;height:2px;background:#d6d6d6"></div><div class="abs" style="left:584.2px;top:318.16px;width:1.8px;height:25.17px;background:#d6d6d6"></div><div class="t" style="left:52.20px;top:324.00px;font-size:16px;color:#1b1b1b;transform:scaleX(0.8269)">Max_Pending</div><div class="t" style="left:589.90px;top:324.00px;font-size:16px;color:#1b1b1b;transform:scaleX(0.8479)">20.0</div><svg class="abs" style="left:26.75px;top:320.86px" width="21" height="22" viewBox="0 0 21 22"><defs><linearGradient id="g8" x1="0" y1="0" x2="1" y2="1"><stop offset="0" stop-color="#c2f2fb"/><stop offset="1" stop-color="#7ccfe3"/></linearGradient></defs><path d="M0.6 3 Q0.6 1.2 2.4 1.2 H14.8 L19.8 6 V19.6 L18.6 20.4 L17 19.5 L15.3 20.4 L14 17.3 L12.6 18.3 L11.3 17.3 L10 18.3 L8.7 17.3 L7.4 18.3 L6 17.4 L4.6 18.8 L3 18.4 L1.8 19.4 L0.6 18.8 Z" fill="url(#g8)" stroke="#6ab4c6" stroke-width="0.9" stroke-linejoin="round"/><path d="M14.8 1.4 V6.2 H19.6" fill="none" stroke="#6ab4c6" stroke-width="0.9"/><g fill="none" stroke="#3a8797" stroke-width="1.4" stroke-linecap="round" stroke-linejoin="round"><path d="M3.4 5.6 L4.5 4.8 V12"/><path d="M5.6 12.2 L7.8 5"/><path d="M8.8 8.4 Q9.6 7.1 10.9 7.3 Q12.4 7.7 11.8 9.2 L9 12.3 H12.6"/></g></svg><div class="abs" style="left:25px;top:343.33px;width:1123px;height:25.17px;background:#e9e9e9"></div><div class="abs" style="left:25px;top:367.50px;width:1123px;height:2px;background:#d6d6d6"></div><div class="abs" style="left:584.2px;top:343.33px;width:1.8px;height:25.17px;background:#d6d6d6"></div><div class="t" style="left:52.20px;top:350.00px;font-size:16px;color:#1b1b1b;transform:scaleX(0.8085)">Delete_All_orders_from</div><div class="t" style="left:589.90px;top:350.00px;font-size:16px;color:#1b1b1b;transform:scaleX(0.8493)">22:00</div><svg class="abs" style="left:26.75px;top:346.03px" width="21" height="22" viewBox="0 0 21 22"><defs><linearGradient id="g9" x1="0" y1="0" x2="1" y2="1"><stop offset="0" stop-color="#fcf5b8"/><stop offset="1" stop-color="#e4d66a"/></linearGradient></defs><path d="M0.6 3 Q0.6 1.2 2.4 1.2 H14.8 L19.8 6 V19.6 L18.6 20.4 L17 19.5 L15.3 20.4 L14 17.3 L12.6 18.3 L11.3 17.3 L10 18.3 L8.7 17.3 L7.4 18.3 L6 17.4 L4.6 18.8 L3 18.4 L1.8 19.4 L0.6 18.8 Z" fill="url(#g9)" stroke="#c2b24e" stroke-width="0.9" stroke-linejoin="round"/><path d="M14.8 1.4 V6.2 H19.6" fill="none" stroke="#c2b24e" stroke-width="0.9"/><text x="2.2" y="14.6" font-family="Liberation Sans" font-weight="bold" font-size="12.5" fill="#7a6f1e" textLength="12" lengthAdjust="spacingAndGlyphs">ab</text></svg><div class="abs" style="left:25px;top:368.50px;width:1123px;height:25.17px;background:#fff"></div><div class="abs" style="left:25px;top:392.67px;width:1123px;height:2px;background:#d6d6d6"></div><div class="abs" style="left:584.2px;top:368.50px;width:1.8px;height:25.17px;background:#d6d6d6"></div><div class="t" style="left:52.20px;top:375.00px;font-size:16px;color:#1b1b1b;transform:scaleX(0.8165)">Delete_All_orders_to</div><div class="t" style="left:589.90px;top:375.00px;font-size:16px;color:#1b1b1b;transform:scaleX(0.8493)">02:00</div><svg class="abs" style="left:26.75px;top:371.20px" width="21" height="22" viewBox="0 0 21 22"><defs><linearGradient id="g10" x1="0" y1="0" x2="1" y2="1"><stop offset="0" stop-color="#fcf5b8"/><stop offset="1" stop-color="#e4d66a"/></linearGradient></defs><path d="M0.6 3 Q0.6 1.2 2.4 1.2 H14.8 L19.8 6 V19.6 L18.6 20.4 L17 19.5 L15.3 20.4 L14 17.3 L12.6 18.3 L11.3 17.3 L10 18.3 L8.7 17.3 L7.4 18.3 L6 17.4 L4.6 18.8 L3 18.4 L1.8 19.4 L0.6 18.8 Z" fill="url(#g10)" stroke="#c2b24e" stroke-width="0.9" stroke-linejoin="round"/><path d="M14.8 1.4 V6.2 H19.6" fill="none" stroke="#c2b24e" stroke-width="0.9"/><text x="2.2" y="14.6" font-family="Liberation Sans" font-weight="bold" font-size="12.5" fill="#7a6f1e" textLength="12" lengthAdjust="spacingAndGlyphs">ab</text></svg><div class="abs" style="left:25px;top:393.67px;width:1123px;height:25.17px;background:#e9e9e9"></div><div class="abs" style="left:25px;top:417.84px;width:1123px;height:2px;background:#d6d6d6"></div><div class="abs" style="left:584.2px;top:393.67px;width:1.8px;height:25.17px;background:#d6d6d6"></div><div class="t" style="left:52.20px;top:400.00px;font-size:16px;color:#1b1b1b;transform:scaleX(0.8294)">Delete_ALL_orders_if_spread_is_Higher than X</div><div class="t" style="left:589.90px;top:400.00px;font-size:16px;color:#1b1b1b;transform:scaleX(0.8437)">10000.0</div><svg class="abs" style="left:26.75px;top:396.37px" width="21" height="22" viewBox="0 0 21 22"><defs><linearGradient id="g11" x1="0" y1="0" x2="1" y2="1"><stop offset="0" stop-color="#c2f2fb"/><stop offset="1" stop-color="#7ccfe3"/></linearGradient></defs><path d="M0.6 3 Q0.6 1.2 2.4 1.2 H14.8 L19.8 6 V19.6 L18.6 20.4 L17 19.5 L15.3 20.4 L14 17.3 L12.6 18.3 L11.3 17.3 L10 18.3 L8.7 17.3 L7.4 18.3 L6 17.4 L4.6 18.8 L3 18.4 L1.8 19.4 L0.6 18.8 Z" fill="url(#g11)" stroke="#6ab4c6" stroke-width="0.9" stroke-linejoin="round"/><path d="M14.8 1.4 V6.2 H19.6" fill="none" stroke="#6ab4c6" stroke-width="0.9"/><g fill="none" stroke="#3a8797" stroke-width="1.4" stroke-linecap="round" stroke-linejoin="round"><path d="M3.4 5.6 L4.5 4.8 V12"/><path d="M5.6 12.2 L7.8 5"/><path d="M8.8 8.4 Q9.6 7.1 10.9 7.3 Q12.4 7.7 11.8 9.2 L9 12.3 H12.6"/></g></svg><div class="abs" style="left:25px;top:418.84px;width:1123px;height:25.17px;background:#fff"></div><div class="abs" style="left:25px;top:443.01px;width:1123px;height:2px;background:#d6d6d6"></div><div class="abs" style="left:584.2px;top:418.84px;width:1.8px;height:25.17px;background:#d6d6d6"></div><div class="t" style="left:52.20px;top:425.00px;font-size:16px;color:#1b1b1b;transform:scaleX(0.8394)">Magic Number, kind of...</div><div class="t" style="left:589.90px;top:425.00px;font-size:16px;color:#1b1b1b;transform:scaleX(0.9085)">1111</div><svg class="abs" style="left:26.75px;top:421.54px" width="21" height="22" viewBox="0 0 21 22"><defs><linearGradient id="g12" x1="0" y1="0" x2="1" y2="1"><stop offset="0" stop-color="#c0defa"/><stop offset="1" stop-color="#7db1e6"/></linearGradient></defs><path d="M0.6 3 Q0.6 1.2 2.4 1.2 H14.8 L19.8 6 V19.6 L18.6 20.4 L17 19.5 L15.3 20.4 L14 17.3 L12.6 18.3 L11.3 17.3 L10 18.3 L8.7 17.3 L7.4 18.3 L6 17.4 L4.6 18.8 L3 18.4 L1.8 19.4 L0.6 18.8 Z" fill="url(#g12)" stroke="#6a98c6" stroke-width="0.9" stroke-linejoin="round"/><path d="M14.8 1.4 V6.2 H19.6" fill="none" stroke="#6a98c6" stroke-width="0.9"/><text x="2.6" y="14.8" font-family="Liberation Sans" font-weight="bold" font-size="8.6" fill="#1d4a78" textLength="12.7" lengthAdjust="spacingAndGlyphs">123</text></svg><div class="btn" style="left:1161.0px;top:702.4px;width:128.2px;height:25.3px;"></div><div class="t" style="left:1209.60px;top:707.00px;font-size:15px;color:#1b1b1b;transform:scaleX(0.8719)">Load</div><div class="btn" style="left:1161.0px;top:743.8px;width:128.2px;height:25.5px;"></div><div class="t" style="left:1209.60px;top:749.00px;font-size:15px;color:#1b1b1b;transform:scaleX(0.8893)">Save</div><div class="btn" style="left:1004.0px;top:791.4px;width:91.4px;height:26.2px;border:2px solid #539fdd;border-radius:5px;"></div><div class="t" style="left:1040.00px;top:796.00px;font-size:15px;color:#1b1b1b;transform:scaleX(0.8904)">OK</div><div class="btn" style="left:1106.5px;top:791.4px;width:90.7px;height:26.2px;"></div><div class="t" style="left:1128.80px;top:796.00px;font-size:15px;color:#1b1b1b;transform:scaleX(0.8742)">Annuler</div><div class="btn" style="left:1208.5px;top:791.4px;width:90.7px;height:26.2px;"></div><div class="t" style="left:1236.00px;top:796.00px;font-size:15px;color:#1b1b1b;transform:scaleX(0.8601)">Reset</div><svg class="abs" style="left:1296px;top:814px" width="12" height="12"><g fill="#b4b4b4"><circle cx="10.2" cy="3.7" r="1"/><circle cx="6.3" cy="7.4" r="1"/><circle cx="10.2" cy="7.4" r="1"/><circle cx="3.4" cy="11.2" r="1"/><circle cx="6.3" cy="11.2" r="1"/><circle cx="10.2" cy="11.2" r="1"/></g></svg></div>
</body></html>
